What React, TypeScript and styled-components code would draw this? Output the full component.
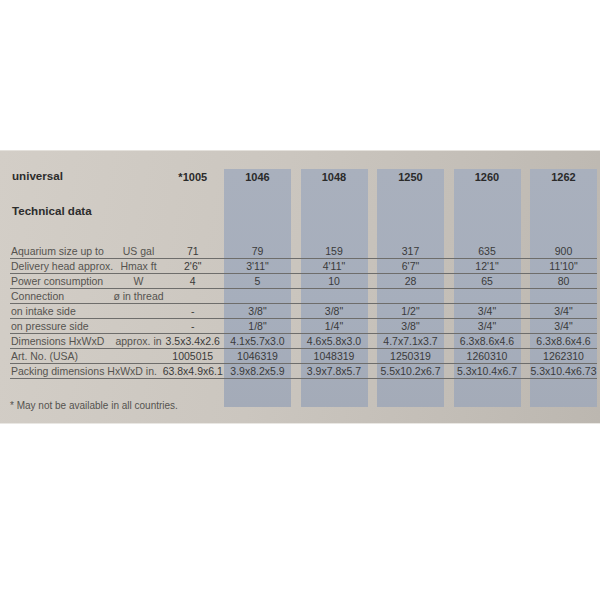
import styled, { createGlobalStyle } from 'styled-components';

const GlobalStyle = createGlobalStyle`
  html, body {
    margin: 0;
    padding: 0;
    background: #ffffff;
  }
  body {
    font-family: "Liberation Sans", Arial, sans-serif;
  }
`;

const COLUMNS = '96px 46px 43.5px repeat(5, 67px)';

const Page = styled.div`
  width: 600px;
  height: 600px;
  padding-top: 150px;
  box-sizing: border-box;
`;

const Panel = styled.section`
  display: grid;
  grid-template-columns: ${COLUMNS};
  grid-template-rows: 20px 28px 27px repeat(9, 15px) 20px 12px;
  column-gap: 9.5px;
  padding: 18px 3px 12px 10px;
  background: linear-gradient(100deg, #d3cec7 0%, #cbc6bf 45%, #c3beb7 75%, #bcb7b0 100%);
  border-top: 1px solid #e4e1dc;
  border-bottom: 1px solid #e9e7e3;
  color: #3b3b3b;
`;

const Band = styled.div<{ $col: number }>`
  grid-column: ${(p) => p.$col};
  grid-row: 1 / -1;
  margin-bottom: 4px;
  background: linear-gradient(180deg, #a9b0bd 0%, #a6aebc 60%, #a4abb8 100%);
`;

const Row = styled.div<{ $row: number; $ruled?: boolean }>`
  grid-column: 1 / -1;
  grid-row: ${(p) => p.$row};
  display: grid;
  grid-template-columns: ${COLUMNS};
  column-gap: 9.5px;
  align-items: center;
  box-sizing: border-box;
  border-bottom: ${(p) => (p.$ruled ? '1px solid #6e6d6b' : 'none')};
`;

const Label = styled.div<{ $span?: number }>`
  grid-column: ${(p) => `1 / span ${p.$span ?? 1}`};
  padding-left: 1px;
  font-size: 10.5px;
  white-space: nowrap;
  color: #55534f;
`;

const Unit = styled.div`
  grid-column: 2;
  display: flex;
  justify-content: center;
  font-size: 10.5px;
  white-space: nowrap;
  color: #55534f;
`;

const Value = styled.div<{ $col: number }>`
  grid-column: ${(p) => p.$col};
  display: flex;
  justify-content: center;
  font-size: 10.5px;
  white-space: nowrap;
  color: #3a3a3a;
`;

const Heading = styled.div`
  grid-column: 1 / span 2;
  padding-left: 2px;
  font-size: 11.6px;
  font-weight: 700;
  color: #2c2c2c;
  white-space: nowrap;
`;

const ModelName = styled.div<{ $col: number }>`
  grid-column: ${(p) => p.$col};
  display: flex;
  justify-content: center;
  padding-top: 2px;
  font-size: 11px;
  font-weight: 700;
  color: #2a2a2a;
`;

const TechRow = styled.div`
  grid-column: 1 / span 3;
  grid-row: 2;
  align-self: end;
`;

const HeaderRow = styled.div`
  grid-column: 1 / -1;
  grid-row: 1;
  display: grid;
  grid-template-columns: ${COLUMNS};
  column-gap: 9.5px;
  align-items: start;
`;

const Footnote = styled.div`
  grid-column: 1 / span 3;
  grid-row: 14;
  align-self: center;
  font-size: 10px;
  color: #55534f;
  white-space: nowrap;
`;

const models = ['1046', '1048', '1250', '1260', '1262'];

type Spec = {
  label: string;
  unit?: string;
  span?: number;
  base?: string;
  values?: string[];
};

const specs: Spec[] = [
  { label: 'Aquarium size up to', unit: 'US gal', base: '71', values: ['79', '159', '317', '635', '900'] },
  { label: 'Delivery head approx.', unit: 'Hmax ft', base: '2\'6"', values: ['3\'11"', '4\'11"', '6\'7"', '12\'1"', '11\'10"'] },
  { label: 'Power consumption', unit: 'W', base: '4', values: ['5', '10', '28', '65', '80'] },
  { label: 'Connection', unit: 'ø in thread' },
  { label: 'on intake side', base: '-', values: ['3/8"', '3/8"', '1/2"', '3/4"', '3/4"'] },
  { label: 'on pressure side', base: '-', values: ['1/8"', '1/4"', '3/8"', '3/4"', '3/4"'] },
  {
    label: 'Dimensions  HxWxD',
    unit: 'approx. in',
    base: '3.5x3.4x2.6',
    values: ['4.1x5.7x3.0', '4.6x5.8x3.0', '4.7x7.1x3.7', '6.3x8.6x4.6', '6.3x8.6x4.6'],
  },
  { label: 'Art. No. (USA)', base: '1005015', values: ['1046319', '1048319', '1250319', '1260310', '1262310'] },
  {
    label: 'Packing dimensions HxWxD in.',
    span: 2,
    base: '63.8x4.9x6.1',
    values: ['3.9x8.2x5.9', '3.9x7.8x5.7', '5.5x10.2x6.7', '5.3x10.4x6.7', '5.3x10.4x6.73'],
  },
];

export default function App() {
  return (
    <Page>
      <GlobalStyle />
      <Panel>
        {models.map((m, i) => (
          <Band key={m} $col={4 + i} />
        ))}
        <HeaderRow>
          <Heading>universal</Heading>
          <ModelName $col={3}>*1005</ModelName>
          {models.map((m, i) => (
            <ModelName key={m} $col={4 + i}>
              {m}
            </ModelName>
          ))}
        </HeaderRow>
        <TechRow>
          <Heading>Technical data</Heading>
        </TechRow>
        {specs.map((s, r) => (
          <Row key={s.label} $row={4 + r} $ruled>
            <Label $span={s.span}>{s.label}</Label>
            {s.unit && <Unit>{s.unit}</Unit>}
            {s.base && <Value $col={3}>{s.base}</Value>}
            {s.values?.map((v, i) => (
              <Value key={i} $col={4 + i}>
                {v}
              </Value>
            ))}
          </Row>
        ))}
        <Footnote>* May not be available in all countries.</Footnote>
      </Panel>
    </Page>
  );
}
